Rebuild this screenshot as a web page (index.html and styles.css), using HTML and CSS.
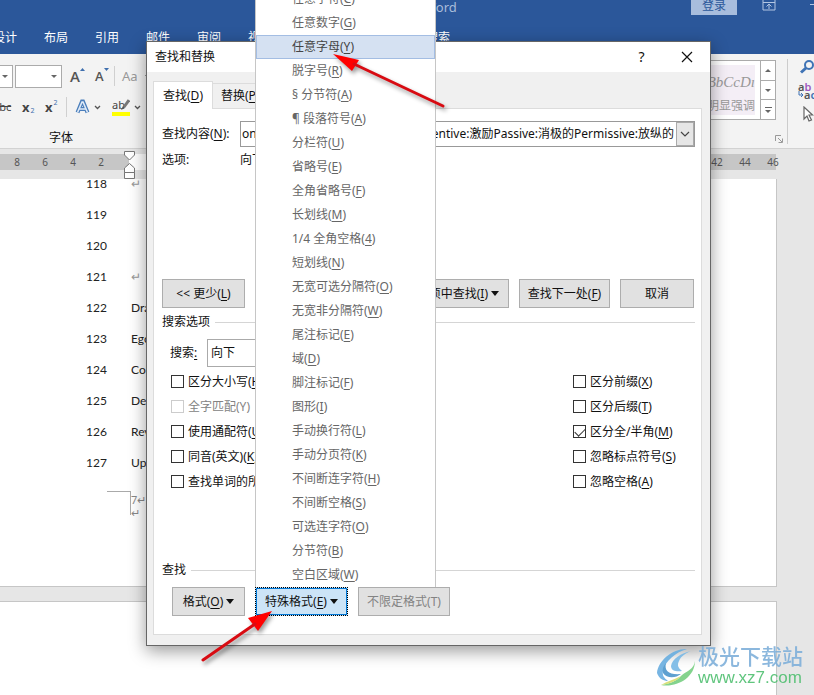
FILE: index.html
```html
<!DOCTYPE html>
<html lang="zh-CN">
<head>
<meta charset="utf-8">
<title>Word</title>
<link rel="stylesheet" href="styles.css">
</head>
<body>
<div class="app">
  <header class="header">
    <div class="titlebar">
      <span class="title">Word</span>
      <button class="login">登录</button>
      <svg class="ribbon-toggle" width="14" height="12" viewBox="0 0 14 12"><path d="M1 0V10H13V0M1 2.500H13M7 9V4.500M4.500 6.500L7 4L9.500 6.500" fill="none" stroke="#b3c6e2"/></svg>
      <svg class="minimize" width="10" height="12" viewBox="0 0 10 12"><path d="M0 4.500H10" stroke="#b3c6e2"/></svg>
    </div>
    <nav class="tabs">
      <a href="#">设计</a><a href="#">布局</a><a href="#">引用</a><a href="#">邮件</a><a href="#">审阅</a><a href="#">视图</a>
      <a href="#" class="tell-me">操作说明搜索</a>
    </nav>
  </header>

  <section class="ribbon">
    <div class="font-group">
      <div class="tools top">
        <button class="drop narrow" aria-label="字体"><i class="caret"></i></button>
        <button class="drop" aria-label="字号"><i class="caret"></i></button>
        <span class="size grow">A<svg width="5" height="3" viewBox="0 0 5 3"><path d="M0 3L2.500 0L5 3Z" fill="#3f6fae"/></svg></span>
        <span class="size shrink">A<svg width="5" height="3" viewBox="0 0 5 3"><path d="M0 0L2.500 3L5 0Z" fill="#3f6fae"/></svg></span>
        <i class="divider"></i>
        <span class="case">Aa</span>
        <svg class="chev" width="7" height="5" viewBox="0 0 7 5"><path d="M1 1L3.500 3.500L6 1" fill="none" stroke="#999"/></svg>
      </div>
      <div class="tools bottom">
        <span class="strike">abc</span>
        <span class="script-x">x<sub>2</sub></span>
        <span class="script-x sup">x<sup>2</sup></span>
        <i class="divider"></i>
        <svg class="effect" width="15" height="16" viewBox="0 0 15 16"><path d="M2.500 13.500L7 2.500H8L12.500 13.500M4.500 10H10.500" fill="none" stroke="#4a7ebb" stroke-width="4"/><path d="M2.500 13.500L7 3H8L12.500 13.500M4.500 10H10.500" fill="none" stroke="#dfeaf7" stroke-width="1.600"/></svg>
        <svg class="chev" width="7" height="5" viewBox="0 0 7 5"><path d="M1 1L3.500 3.500L6 1" fill="none" stroke="#555" stroke-width="1.300"/></svg>
        <span class="highlight"><span>ab</span><svg width="10" height="12" viewBox="0 0 10 12"><path d="M9 1L4 8" stroke="#777" stroke-width="3"/><path d="M3 7L1 11L5 9Z" fill="#555"/></svg></span>
        <svg class="chev" width="7" height="5" viewBox="0 0 7 5"><path d="M1 1L3.500 3.500L6 1" fill="none" stroke="#555" stroke-width="1.300"/></svg>
      </div>
      <div class="group-name">字体</div>
    </div>
    <div class="gallery">
      <div class="style-card"><span class="sample">AaBbCcDı</span><span>明显强调</span></div>
      <div class="gallery-nav">
        <button aria-label="上"><i class="caret up"></i></button>
        <button aria-label="下"><i class="caret"></i></button>
        <button aria-label="更多"><i class="more-line"></i><i class="caret"></i></button>
      </div>
    </div>
    <svg class="launcher" width="8" height="8" viewBox="0 0 8 8"><path d="M.5 6V.5H6M3 3L7 7M7.500 3.500V7.500H3.500" fill="none" stroke="#999"/></svg>
    <div class="edit-group">
      <svg width="18" height="16" viewBox="0 0 18 16"><circle cx="10" cy="6" r="4" fill="none" stroke="#3f73b5" stroke-width="2"/><path d="M7 9L2 13.500" stroke="#3f73b5" stroke-width="3"/></svg>
      <div class="replace"><span>a<b>b</b></span><span><svg width="6" height="8" viewBox="0 0 6 8"><path d="M1 0V4H5M3 2L5 4L3 6" fill="none" stroke="#3f73b5"/></svg>a<em>c</em></span></div>
      <svg width="18" height="18" viewBox="0 0 18 18"><path d="M5 1V13L8 10L10 15L12.500 14L10 9H13.500Z" fill="#fff" stroke="#666" stroke-width="1.200"/></svg>
    </div>
  </section>

  <div class="ruler">
    <div class="band"><div class="margin-left"><span>8</span><span>6</span><span>4</span><span>2</span></div><div class="scale"></div><div class="margin-right"><span>42</span><span>44</span><span>46</span></div></div>
    <svg class="indent" width="13" height="30" viewBox="0 0 13 30"><path d="M1.500 2.500H11.500V6L6.500 11L1.500 6ZM6.500 14.500L11.500 19V23.500H1.500V19ZM1.500 23.500H11.500V29.500H1.500Z" fill="#fff" stroke="#777"/></svg>
  </div>

  <main class="document">
    <article class="page">
      <ol class="lines">
        <li><span>118</span>↵</li><li><span>119</span></li><li><span>120</span></li><li><span>121</span>↵</li>
        <li><span>122</span><b>Dramatic</b></li><li><span>123</span><b>Ego</b></li><li><span>124</span><b>Cold</b></li><li><span>125</span><b>Dense</b></li><li><span>126</span><b>Revive</b></li><li><span>127</span><b>Upset</b></li>
      </ol>
      <footer class="page-foot"><i></i><div><p>7↵</p><p>↵</p></div></footer>
    </article>
    <article class="page next"></article>
  </main>
</div>

<section class="dialog" role="dialog" aria-label="查找和替换">
  <header class="dialog-title"><span>查找和替换</span><button aria-label="帮助">?</button><button aria-label="关闭"><svg width="12" height="12" viewBox="0 0 12 12"><path d="M1 1L11 11M11 1L1 11" stroke="#111" stroke-width="1.200"/></svg></button></header>
  <div class="dialog-body">
    <div class="dialog-tabs"><button class="active">查找(<u>D</u>)</button><button class="second-tab">替换(<u>P</u>)</button></div>
    <div class="panel">
      <div class="row find-row"><label for="what">查找内容(<u>N</u>):</label><div class="combo"><input id="what" type="text" value="only:唯一的Preventive:预防性的Attentive:激励Passive:消极的Permissive:放纵的"><button aria-label="历史"><svg width="10" height="6" viewBox="0 0 10 6"><path d="M1 1L5 5L9 1" fill="none" stroke="#444" stroke-width="1.200"/></svg></button></div></div>
      <div class="row option-row"><span>选项:</span><span>向下</span></div>
      <div class="row actions"><button class="btn less">&lt;&lt; 更少(<u>L</u>)</button><button class="btn wide">在以下项中查找(<u>I</u>)<i class="tri"></i></button><button class="btn find-next">查找下一处(<u>F</u>)</button><button class="btn cancel">取消</button></div>
      <h2 class="legend">搜索选项</h2>
      <div class="row search-row"><label for="dir">搜索<u>:</u></label><select id="dir"><option>向下</option></select></div>
      <div class="checks">
        <div>
          <label><input type="checkbox"><span>区分大小写(<u>H</u>)</span></label>
          <label class="off"><input type="checkbox" disabled><span>全字匹配(Y)</span></label>
          <label><input type="checkbox"><span>使用通配符(<u>U</u>)</span></label>
          <label><input type="checkbox"><span>同音(英文)(<u>K</u>)</span></label>
          <label><input type="checkbox"><span>查找单词的所有形式</span></label>
        </div>
        <div class="right">
          <label><input type="checkbox"><span>区分前缀(<u>X</u>)</span></label>
          <label><input type="checkbox"><span>区分后缀(<u>T</u>)</span></label>
          <label><input type="checkbox" checked><span>区分全/半角(<u>M</u>)</span></label>
          <label><input type="checkbox"><span>忽略标点符号(<u>S</u>)</span></label>
          <label><input type="checkbox"><span>忽略空格(<u>A</u>)</span></label>
        </div>
      </div>
      <h2 class="legend find-legend">查找</h2>
      <div class="row formats"><button class="btn format">格式(<u>O</u>)<i class="tri"></i></button><button class="btn special">特殊格式(<u>E</u>)<i class="tri"></i></button><button class="btn none" disabled>不限定格式(T)</button></div>
    </div>
  </div>
</section>

<ul class="menu" role="menu">
  <li>任意字符(<u>C</u>)</li><li>任意数字(<u>G</u>)</li><li class="hot">任意字母(<u>Y</u>)</li><li>脱字号(<u>R</u>)</li><li>§ 分节符(<u>A</u>)</li><li>¶ 段落符号(<u>A</u>)</li><li>分栏符(<u>U</u>)</li><li>省略号(<u>E</u>)</li><li>全角省略号(<u>F</u>)</li><li>长划线(<u>M</u>)</li><li>1/4 全角空格(<u>4</u>)</li><li>短划线(<u>N</u>)</li><li>无宽可选分隔符(<u>O</u>)</li><li>无宽非分隔符(<u>W</u>)</li><li>尾注标记(<u>E</u>)</li><li>域(<u>D</u>)</li><li>脚注标记(<u>F</u>)</li><li>图形(<u>I</u>)</li><li>手动换行符(<u>L</u>)</li><li>手动分页符(<u>K</u>)</li><li>不间断连字符(<u>H</u>)</li><li>不间断空格(<u>S</u>)</li><li>可选连字符(<u>O</u>)</li><li>分节符(<u>B</u>)</li><li>空白区域(<u>W</u>)</li>
</ul>

<svg class="arrow first" width="120" height="65" viewBox="0 0 120 65"><path d="M1 3L27 9L20 20Z" fill="#f00"/><path d="M22 13L111 55" stroke="#d80b12" stroke-width="3" stroke-linecap="round"/></svg>
<svg class="arrow second" width="80" height="58" viewBox="0 0 80 58"><path d="M71 1L47 8L57 21Z" fill="#f00"/><path d="M54 14L2 50" stroke="#d80b12" stroke-width="3" stroke-linecap="round"/></svg>

<div class="watermark">
  <svg width="44" height="42" viewBox="0 0 44 42"><path d="M33 3C20 2 4 14 3 27C5 33 10 35 14 35C10 32 8 29 9 25C11 15 22 6 33 3Z" fill="#69aee0"/><path d="M37 5C27 7 18 13 17 20C17 25 23 26 28 25C24 22 23 19 25 15C27 10 32 7 37 5Z" fill="#79b9e6"/><path d="M12 17C10 25 15 29 27 28C22 32 13 33 9 27C8 24 9 20 12 17Z" fill="#4d96cb"/><path d="M41 15C40 23 33 25 28 29C23 35 15 38 7 39C22 42 41 32 41 15Z" fill="#77cf82"/><path d="M7 39C15 38 23 35 27 30C20 34 13 35 7 39Z" fill="#d5dd6c"/></svg>
  <div><strong>极光下载站</strong><span>www.xz7.com</span></div>
</div>
</body>
</html>
```

FILE: styles.css
```css
* { box-sizing: border-box; }
body { margin: 0; min-height: 100vh; position: relative; overflow: hidden; font: 12px/16px "Noto Sans", "Noto Sans CJK SC", sans-serif; color: #111; background: #e6e6e6; }
button, input, select { font: inherit; color: inherit; margin: 0; padding: 0; border: 0; background: none; }
u { text-decoration: underline; text-underline-offset: 2px; }
.app { display: flex; flex-direction: column; height: 100vh; overflow: hidden; }

.header { height: 54px; background: #2b579a; flex: none; }
.titlebar { height: 28px; display: flex; align-items: flex-start; padding-left: 424px; }
.title { font-size: 13px; line-height: 14px; color: #a9bddb; }
.login { margin-left: auto; width: 46px; height: 15px; line-height: 12px; padding-bottom: 3px; background: #a8bddd; color: #2b579a; }
.ribbon-toggle { margin-left: 25px; }
.minimize { margin: 0 -6px 0 34px; }
.tabs { display: flex; gap: 27px; margin-left: -7px; padding-top: 2px; }
.tabs a { color: #fff; text-decoration: none; white-space: nowrap; }
.tabs .tell-me { margin-left: 79px; }

.ribbon { height: 95px; flex: none; display: flex; background: #f3f3f3; border-bottom: 1px solid #d2d2d2; }
.tools { display: flex; align-items: center; height: 24px; }
.top { margin-top: 10px; }
.bottom { margin-top: 7px; }
.drop { width: 47px; height: 23px; border: 1px solid #ababab; background: #fff; display: flex; align-items: center; justify-content: flex-end; padding-right: 4px; }
.narrow { width: 13px; border-left: 0; margin-right: 2px; }
.caret { border: 3px solid transparent; border-top-color: #666; border-bottom: 0; }
.caret.up { border-top: 0; border-bottom: 3px solid #666; }
.size { display: flex; width: 16px; font: 600 15px/20px "Open Sans", sans-serif; color: #555; }
.size svg { flex: none; margin-top: 2px; }
.grow { margin-left: 8px; }
.shrink { margin-left: 9px; font-size: 13px; }
.divider { width: 1px; height: 20px; background: #d0d0d0; margin-left: 3px; }
.case { font-size: 13px; color: #999; margin-left: 7px; }
.chev { margin-left: 6px; }
.strike { margin-left: -7px; width: 20px; font-size: 11px; text-decoration: line-through; color: #444; }
.script-x { margin-left: 9px; width: 14px; font-weight: 700; font-size: 13px; color: #444; display: flex; }
.script-x sub, .script-x sup { font-size: 7px; line-height: 8px; color: #3f6fae; font-weight: 400; margin-left: 1px; }
.script-x sub { align-self: flex-end; }
.script-x.sup { width: 15px; }
.bottom .divider { margin-left: 6px; }
.effect { margin-left: 8px; }
.bottom .chev { margin-left: 4px; }
.highlight { display: flex; margin-left: 11px; width: 18px; height: 17px; border-bottom: 4px solid #ff0; font-size: 11px; line-height: 12px; color: #444; }
.highlight span { width: 8px; }
.highlight svg { flex: none; }
.group-name { margin: 11px 0 0 49px; }
.gallery { margin: 6px -1px 0 auto; height: 60px; display: flex; border: 1px solid #ababab; background: #fff; }
.style-card { margin: 4px 5px; width: 56px; background: #f4eef6; display: flex; flex-direction: column; align-items: flex-end; justify-content: space-between; color: #999; white-space: nowrap; padding: 8px 0 1px; }
.sample { font: italic 15px/18px "Liberation Serif", serif; }
.gallery-nav { width: 15px; display: flex; flex-direction: column; border-left: 1px solid #ababab; }
.gallery-nav button { flex: 1; display: flex; flex-direction: column; align-items: center; justify-content: center; gap: 2px; }
.gallery-nav button + button { border-top: 1px solid #ababab; }
.more-line { width: 7px; height: 1px; background: #666; }
.launcher { align-self: flex-end; margin: 0 4px 5px 0; }
.edit-group { border-left: 1px solid #ccc; margin: 5px 0 4px; width: 27px; padding-left: 10px; display: flex; flex-direction: column; align-items: flex-start; overflow: hidden; }
.edit-group > svg { flex: none; margin-left: 1px; }
.replace { display: flex; flex-direction: column; font-size: 11px; line-height: 8px; height: 20px; font-weight: 600; color: #555; margin: 8px 0 3px; white-space: nowrap; }
.replace b { color: #a05ac0; font-weight: 600; }
.replace em { color: #3f73b5; font-style: normal; }

.ruler { height: 30px; flex: none; padding-top: 5px; position: relative; }
.band { display: flex; height: 16px; width: calc(100% - 38px); font-size: 10px; line-height: 16px; color: #555; background: #c6c6c6; }
.margin-left { width: 129px; display: flex; padding-left: 3px; }
.band span { width: 28px; text-align: center; flex: none; }
.scale { flex: 1; background: #fff; }
.margin-right { display: flex; width: 73px; }
.indent { position: absolute; left: 123px; top: 0; }
.document { flex: 1; overflow: hidden; }
.page { width: calc(100% - 37px); height: 408px; background: #fff; border: 1px solid #c6c6c6; border-width: 0 1px 1px 0; overflow: hidden; }
.page.next { margin-top: 14px; border-width: 1px 1px 0 0; }
.lines { list-style: none; margin: -11px 0 0; padding: 0 0 0 86px; font: 12px/31px Lato, sans-serif; color: #999; }
.lines li { display: flex; height: 31px; }
.lines span { width: 45px; color: #222; }
.lines b { font-weight: 400; color: #222; }
.page-foot { display: flex; margin: 13px 0 0 107px; color: #888; font-size: 11px; line-height: 13px; }
.page-foot i { width: 24px; height: 24px; border: 1px solid #aaa; border-width: 1px 1px 0 0; }
.page-foot div { padding-top: 2px; }
.page-foot p { margin: 0; }

.dialog { position: absolute; left: 146px; right: 103px; top: 41px; border: 1px solid #666; background: #f0f0f0; box-shadow: 0 5px 16px rgba(0, 0, 0, .4); }
.dialog-title { height: 30px; background: #fff; display: flex; align-items: center; padding: 0 1px 0 8px; }
.dialog-title span { flex: 1; }
.dialog-title button { width: 45px; height: 30px; font-size: 14px; }
.dialog-title button svg { display: block; margin: 0 auto; }
.dialog-body { padding: 9px 8px 10px 6px; }
.dialog-tabs { display: flex; align-items: flex-end; height: 27px; }
.dialog-tabs button { width: 60px; height: 25px; border: 1px solid #dcdcdc; border-bottom: 0; white-space: nowrap; }
.dialog-tabs .active { height: 28px; margin-bottom: -1px; background: #fff; position: relative; }
.dialog-tabs .second-tab { border-left: 0; text-align: left; padding-left: 8px; }
.panel { background: #fff; border: 1px solid #dcdcdc; padding: 12px 6px 17px 8px; }
.row { display: flex; align-items: center; }
.find-row label { width: 78px; }
.combo { flex: 1; height: 26px; display: flex; border: 1px solid #999; }
.combo input { flex: 1; min-width: 0; padding-left: 1px; outline: 0; }
.combo button { width: 18px; border: 1px solid #aaa; background: #e6e6e6; display: flex; align-items: center; justify-content: center; }
.option-row { margin-top: 5px; }
.option-row span { width: 78px; }
.actions { margin: 111px 1px 0 0; gap: 10px; }
.btn { height: 29px; border: 1px solid #adadad; background: #e1e1e1; display: flex; align-items: center; justify-content: center; white-space: nowrap; }
.less { width: 83px; }
.wide { margin-left: auto; width: 130px; justify-content: flex-end; padding-right: 9px; }
.find-next { width: 91px; }
.cancel { width: 74px; }
.tri { border: 4px solid transparent; border-top: 5px solid #111; border-bottom: 0; margin-left: 3px; }
.legend { font: inherit; margin: 6px 0 0; display: flex; align-items: center; gap: 5px; }
.legend::after { content: ""; flex: 1; height: 1px; background: #d5d5d5; }
.search-row { margin: 9px 0 0 8px; }
.search-row label { width: 37px; }
.search-row select { width: 120px; height: 28px; border: 1px solid #aaa; appearance: none; padding-left: 3px; background: #fff; }
.checks { display: flex; justify-content: space-between; padding: 2px 0 0 9px; }
.checks label { display: flex; align-items: center; gap: 4px; height: 25px; white-space: nowrap; }
.checks .right { width: 122px; }
.checks input { appearance: none; width: 13px; height: 13px; border: 1px solid #333; background: #fff; display: grid; place-items: center; }
.checks input:checked::after { content: ""; width: 9px; height: 5px; border: 1px solid #333; border-width: 0 0 1px 1px; transform: translateY(-1px) rotate(-45deg); }
.off { color: #838383; }
.checks .off input { border-color: #ccc; }
.find-legend { margin-top: 68px; }
.formats { margin: 9px 0 1px 10px; gap: 10px; }
.format { width: 73px; }
.special { width: 93px; border: 1px dotted #000; background: #cce4f7; box-shadow: inset 0 0 0 1px #0078d7; }
.none { width: 92px; color: #838383; }

.menu { position: absolute; left: 255px; top: -14px; width: 181px; margin: 0; padding: 0; list-style: none; border: 1px solid #c6c6c6; border-bottom: 0; background: #fff; color: #666; }
.menu li { height: 24px; line-height: 24px; padding-left: 36px; white-space: nowrap; }
.menu .hot { background: #d5e1f2; box-shadow: inset 0 0 0 1px #a3bde3; color: #444; }
.arrow { position: absolute; filter: drop-shadow(2px 3px 2px rgba(0, 0, 0, .4)); }
.first { left: 332px; top: 51px; }
.second { left: 201px; top: 610px; }

.watermark { position: absolute; right: 11px; bottom: 6px; display: flex; align-items: center; opacity: .9; }
.watermark div { display: flex; flex-direction: column; }
.watermark strong { font: 500 21px/23px "Noto Sans CJK SC", sans-serif; color: #7fb0da; }
.watermark span { font: 17px/22px "Liberation Sans", sans-serif; color: #4fbf70; }
```
